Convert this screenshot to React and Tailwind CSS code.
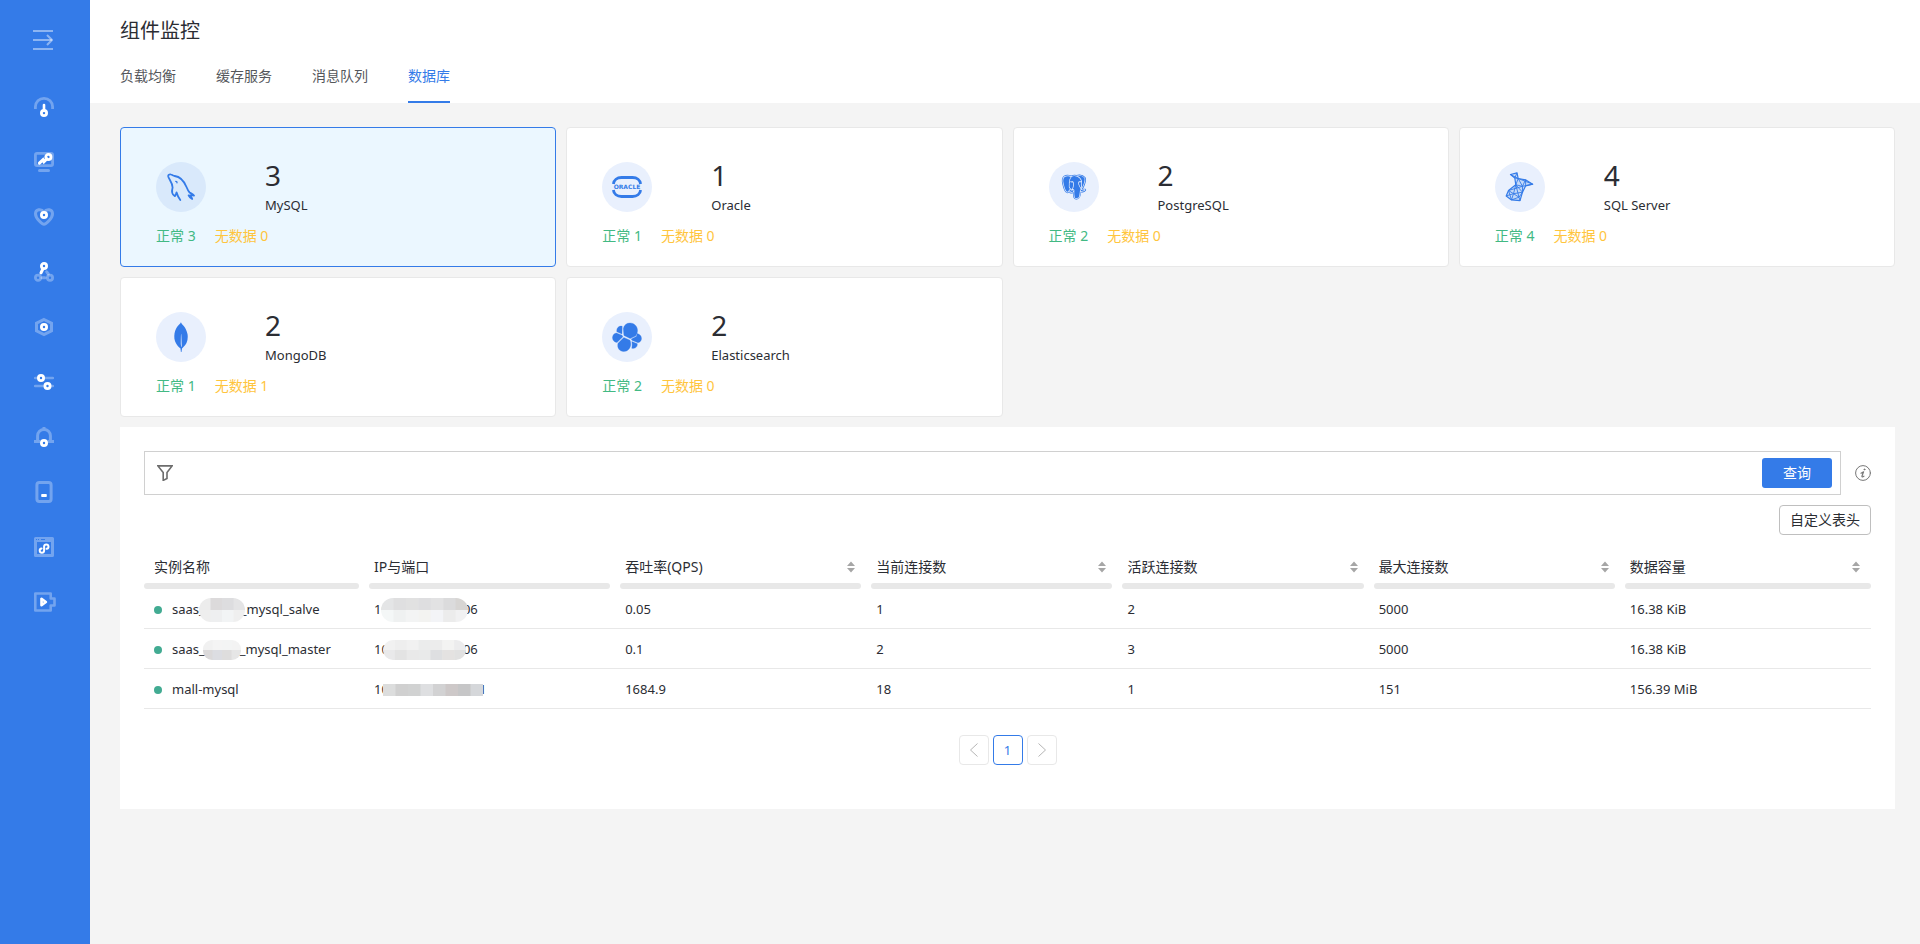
import { BiLogoPostgresql } from "react-icons/bi";
import { SiMongodb } from "react-icons/si";

const CJK = "font-['Noto_Sans','Noto_Sans_CJK_SC',sans-serif]";

/* ---------- sidebar icons ---------- */
const dim = "#ffffff50";

function NavSvg({ children }) {
  return (
    <svg viewBox="0 0 20 20" className="size-5" fill="none" aria-hidden="true">
      {children}
    </svg>
  );
}

const navItems = [
  {
    label: "概览",
    icon: (
      <NavSvg>
        <path d="M1.4 12V9.8a8.6 8.4 0 0 1 17.2 0V12" stroke={dim} strokeWidth="2.8" />
        <path d="M10 8v6" stroke="#fff" strokeWidth="2.6" strokeLinecap="round" />
        <circle cx="10" cy="16" r="2.6" stroke="#fff" strokeWidth="2.8" />
      </NavSvg>
    ),
  },
  {
    label: "监控",
    icon: (
      <NavSvg>
        <rect x="1.4" y="1.4" width="17.2" height="12.2" rx="1.6" stroke={dim} strokeWidth="2.8" />
        <path d="M5.5 18.5h9" stroke={dim} strokeWidth="3" strokeLinecap="round" />
        <path d="M5.4 11.2 9 7.8l1 2 3-3" stroke="#fff" strokeWidth="3" strokeLinecap="round" />
        <circle cx="14.4" cy="5" r="2.6" stroke="#fff" strokeWidth="2.8" />
      </NavSvg>
    ),
  },
  {
    label: "健康",
    icon: (
      <NavSvg>
        <path
          d="M10 17.200c-1.800 0-8.500-5.600-8.500-10.400C1.500 2.300 7 1.300 10 4.900 13 1.300 18.500 2.300 18.500 6.800 18.500 11.600 11.800 17.200 10 17.200Z"
          stroke={dim}
          strokeWidth="3"
        />
        <circle cx="10" cy="8" r="2.600" stroke="#fff" strokeWidth="2.800" />
      </NavSvg>
    ),
  },
  {
    label: "拓扑",
    icon: (
      <NavSvg>
        <circle cx="4" cy="15.700" r="2.600" stroke={dim} strokeWidth="2.800" />
        <circle cx="16" cy="15.700" r="2.600" stroke={dim} strokeWidth="2.800" />
        <path d="M8 15.700h3M14.300 12l-1.600-2.200" stroke={dim} strokeWidth="3" strokeLinecap="round" />
        <circle cx="10" cy="4" r="2.600" stroke="#fff" strokeWidth="2.800" />
        <path d="M8.800 7 7 10.800" stroke="#fff" strokeWidth="3" strokeLinecap="round" />
      </NavSvg>
    ),
  },
  {
    label: "容器",
    icon: (
      <NavSvg>
        <path d="M10 2.500 17.500 6.100v7.800L10 17.500 2.500 13.900V6.100Z" stroke={dim} strokeWidth="3" />
        <circle cx="10" cy="10" r="2.600" stroke="#fff" strokeWidth="2.800" />
      </NavSvg>
    ),
  },
  {
    label: "配置",
    icon: (
      <NavSvg>
        <path d="M1 6h2M11 6h8M1 14h8.500M17.500 14H19" stroke={dim} strokeWidth="2.400" strokeLinecap="round" />
        <circle cx="7" cy="6" r="2.600" stroke="#fff" strokeWidth="2.800" />
        <circle cx="13.500" cy="14" r="2.600" stroke="#fff" strokeWidth="2.800" />
      </NavSvg>
    ),
  },
  {
    label: "告警",
    icon: (
      <NavSvg>
        <path
          d="M6.300 14.500H0M20 14.500h-6.300M3.600 13V8.800a6.400 6.400 0 0 1 12.800 0V13M10 0v2"
          stroke={dim}
          strokeWidth="3"
        />
        <circle cx="10" cy="16" r="2.600" stroke="#fff" strokeWidth="2.800" />
      </NavSvg>
    ),
  },
  {
    label: "终端",
    icon: (
      <svg viewBox="0 0 20 22" className="-my-px h-[22px] w-5" fill="none" aria-hidden="true">
        <rect x="2.900" y="1.500" width="14.200" height="19" rx="2.500" stroke={dim} strokeWidth="3" />
        <rect x="7.200" y="13" width="5.600" height="3" rx="0.800" fill="#fff" />
      </svg>
    ),
  },
  {
    label: "链路",
    icon: (
      <NavSvg>
        <path
          fillRule="evenodd"
          d="M1.500 0h17A1.500 1.500 0 0 1 20 1.500v17a1.500 1.500 0 0 1-1.500 1.500h-17A1.500 1.500 0 0 1 0 18.500v-17A1.500 1.500 0 0 1 1.500 0ZM3 5v12h14V5ZM2 2v1h1V2Zm2 0v1h1V2Zm3 0v1h4V2Z"
          fill={dim}
        />
        <path
          d="M7.600 11.400a2.200 2.200 0 1 0 2.500 2.300V9.500a2.200 2.200 0 1 1 2.500 2.300"
          stroke="#fff"
          strokeWidth="2"
          strokeLinecap="round"
        />
      </NavSvg>
    ),
  },
  {
    label: "回放",
    icon: (
      <svg viewBox="0 0 22 20" className="ml-[2px] h-5 w-[22px]" fill="none" aria-hidden="true">
        <path d="M1.300 1.500h15.400v5h3.800v7h-3.800v5H1.300Z" stroke={dim} strokeWidth="2.600" strokeLinejoin="round" />
        <path d="M7.500 6.800v6.400l4.400-3.200Z" stroke="#fff" strokeWidth="2.600" strokeLinejoin="round" />
      </svg>
    ),
  },
];

/* ---------- database logos ---------- */
function MysqlLogo() {
  return (
    <svg
      viewBox="0 0 30 30"
      className="size-[30px]"
      fill="none"
      stroke="currentColor"
      strokeWidth="1.800"
      strokeLinecap="round"
      strokeLinejoin="round"
      aria-hidden="true"
    >
      <path d="M14.300 28c-1.600-2.300-2.900-4.600-3.700-7.600-.6 1.600-.9 2.700-1.700 3.700C6.500 22.800 5.300 20 6.600 15.400 6.500 10.800 2.800 7 2.200 4.400 1.900 2.900 3.400 2 5 2.500c1.400.4 2.200 1.300 3.700 1.500 6.600.8 9.600 5.800 11.800 11 .9 2.200 1.900 4.300 3.100 5.500 1.500 1 3.200 1.600 4.400 3-1.500-.300-2.900-.400-4.100-.100 1 1.200 1.900 2.100 2.300 3.600-1.600-.9-2.900-2-3.600-3.600" />
      <path d="M9.800 9.400c.8 0 1.300.5 1.200 1.400" strokeWidth="1.300" />
    </svg>
  );
}

function OracleLogo() {
  return (
    <svg viewBox="0 0 30 22" className="h-[22px] w-[30px]" fill="none" aria-hidden="true">
      <path
        d="M1.400 8C1.800 4 5 1.500 9.500 1.500h11c4.500 0 7.700 2.500 8.100 6.500M1.400 14c.4 4 3.600 6.500 8.100 6.500h11c4.500 0 7.700-2.500 8.100-6.500"
        stroke="#347be8"
        strokeWidth="2.800"
      />
      <text
        x="15"
        y="13.100"
        textAnchor="middle"
        fontSize="6"
        fontWeight="700"
        fontFamily="DejaVu Sans, sans-serif"
        fill="#347be8"
      >
        ORACLE
      </text>
    </svg>
  );
}

function SqlServerLogo() {
  return (
    <svg
      viewBox="0 0 30 30"
      className="size-[30px]"
      fill="none"
      stroke="currentColor"
      strokeWidth="1.200"
      strokeLinejoin="round"
      aria-hidden="true"
    >
      <path d="M5.500 2.500 12 .8l1.200 5.700 7.300 1.300 7.200 4.400-7 1.600-3.200 6.400L15 28.700l-8.500-.8-5.300-4 2.300-5.400 7.300-5.700-1-6.800Z" fill="currentColor" fillOpacity="0.200" />
      <path d="M5.500 2.500 13.200 6.500 9.800 6 12 .8M10.800 12.800 13.200 6.500l4.300 7.800 3-6.500.2 6M10.800 12.800l6.700 1.500 10.200-2.100-14.500-5.700M17.500 20.200l0-5.900L3.500 18.500l5 3.200 9-1.500-6.700-7.400-2.300 8.900-7.300 2.200M6.500 27.900l2-6.200 5.500 3.500 1 3.500M17.500 20.200 14 25.200l-7.500 2.700M14 25.200l-3.200-12.400M3.500 18.500l3 9.400" strokeWidth="0.900" />
    </svg>
  );
}

function ElasticLogo() {
  return (
    <svg
      viewBox="0 0 30 30"
      className="size-[30px]"
      fill="currentColor"
      stroke="currentColor"
      strokeWidth="0.300"
      strokeLinejoin="round"
      aria-hidden="true"
    >
      <path d="M11.300 6.500C12 3 14.500 1 18 1c4.200 0 7.500 3.300 7.500 7.500 0 2-.8 4-2 5.500l-5.400 2.600-6.200-3.200Z" />
      <path d="M10.200 4.200 10 12 4.800 9.800C4.300 6.300 6.600 3.500 10.200 4.200Z" />
      <path d="M4.400 11 10 13.200l.9 1.600L5 20.600C2 20 .4 18 .5 15.500.6 13.200 2 11.500 4.400 11Z" />
      <path d="M6 21.300 11.800 15.400 18 18.200c.5 1.300.8 2.400.8 3.800 0 4-3 7.500-7 7.500-4.500 0-7-3.800-5.800-8.200Z" />
      <path d="M25.200 11.500c2.600.7 4.300 2.500 4.300 4.900 0 2.200-1.300 3.800-3.600 4.400l-6-2.600-.6-1.300 5-2.500Z" />
      <path d="m19.800 19.600 5.500 2.200c.3 3-1.700 5-5.500 4.500.4-2.300.5-4.300 0-6.700Z" />
    </svg>
  );
}

const databases = [
  { name: "MySQL", total: 3, ok: 3, none: 0, active: true, logo: <MysqlLogo /> },
  { name: "Oracle", total: 1, ok: 1, none: 0, logo: <OracleLogo /> },
  { name: "PostgreSQL", total: 2, ok: 2, none: 0, logo: <BiLogoPostgresql className="size-[30px]" /> },
  { name: "SQL Server", total: 4, ok: 4, none: 0, logo: <SqlServerLogo /> },
  { name: "MongoDB", total: 2, ok: 1, none: 1, logo: <SiMongodb className="size-[30px]" /> },
  { name: "Elasticsearch", total: 2, ok: 2, none: 0, logo: <ElasticLogo /> },
];

function DatabaseCard({ name, total, ok, none, active, logo }) {
  return (
    <button
      type="button"
      aria-pressed={!!active}
      className={
        "flex h-[140px] cursor-pointer flex-col rounded-[4px] border px-[35px] pt-[30px] text-left " +
        (active ? "border-[#347be8] bg-[#ebf7ff]" : "border-[#e8e8e8] bg-white")
      }
    >
      <span className="flex items-center">
        <span
          className={
            "flex size-[50px] items-center justify-center rounded-full text-[#347be8] " +
            (active ? "bg-[#d9e9fb]" : "bg-[#e9f0fd]")
          }
        >
          {logo}
        </span>
        <span className="ml-[59px] flex flex-col gap-[2px]">
          <span className="text-[28px] leading-[34px]">{total}</span>
          <span className="text-[13px] leading-[22px]">{name}</span>
        </span>
      </span>
      <span className="mt-[9px] flex gap-[19px] text-[14px] leading-[22px]">
        <span className="text-[#42b983]">正常 {ok}</span>
        <span className="text-[#ffc53d]">无数据 {none}</span>
      </span>
    </button>
  );
}

/* ---------- masked values ---------- */
function Mask({ className, width, height, rounded, rows }) {
  const id = "mask-" + width + "-" + height + "-" + rounded;
  const rowHeight = height / rows.length;
  return (
    <svg viewBox={`0 0 ${width} ${height}`} className={"relative shrink-0 " + className} aria-hidden="true">
      <clipPath id={id}>
        <rect width={width} height={height} rx={rounded} />
      </clipPath>
      <g clipPath={`url(#${id})`}>
        {rows.map((colors, r) =>
          colors.map((c, i) => (
            <rect
              key={r + "-" + i}
              x={(i * width) / colors.length}
              y={r * rowHeight}
              width={width / colors.length + 0.5}
              height={rowHeight}
              fill={c}
            />
          ))
        )}
      </g>
    </svg>
  );
}

const instances = [
  {
    name: (
      <>
        saas_
        <Mask
          className="-mr-[4px] -ml-[6px] h-6 w-[46px]"
          width={46}
          height={24}
          rounded={12}
          rows={[
            ["#ececec", "#dcdadb", "#dddddf", "#e4e4e5"],
            ["#eeeeee", "#eeeff0", "#f2f4f5", "#efefef"],
          ]}
        />
        _mysql_salve
      </>
    ),
    ip: (
      <>
        10
        <Mask
          className="-mr-[5px] -ml-2 h-6 w-[87px]"
          width={87}
          height={24}
          rounded={12}
          rows={[
            ["#e4e5e6", "#dfdfe0", "#e1e1e1", "#dedee0", "#e2e2e3", "#dbdbdc", "#d7d5d3"],
            ["#f4f7f7", "#eff1f1", "#f3f4f4", "#f3f3f1", "#f3f4f7", "#ececec", "#f1f1f2"],
          ]}
        />
        06
      </>
    ),
    values: ["0.05", "1", "2", "5000", "16.38 KiB"],
  },
  {
    name: (
      <>
        saas_
        <Mask
          className="-mr-px -ml-[2px] h-5 w-[38px]"
          width={38}
          height={20}
          rounded={9}
          rows={[
            ["#f1f1f1", "#f4f4f4", "#f3f4f4", "#f3f3f3"],
            ["#dbd9da", "#dcdde2", "#dedddd", "#e6e6e6"],
          ]}
        />
        _mysql_master
      </>
    ),
    ip: (
      <>
        10
        <Mask
          className="-mr-[3px] -ml-[6px] h-5 w-[83px]"
          width={83}
          height={20}
          rounded={10}
          rows={[
            ["#f1f1f1", "#eeeeee", "#f1f1f1", "#ebecec", "#ececec", "#f3f3f2", "#ececed"],
            ["#e9e9ea", "#e3e3e3", "#e9e9e9", "#e9eaea", "#dedfe1", "#e4e2e1", "#e1e1e1"],
          ]}
        />
        06
      </>
    ),
    values: ["0.1", "2", "3", "5000", "16.38 KiB"],
  },
  {
    name: "mall-mysql",
    ip: (
      <>
        10
        <Mask
          className="-mr-[4px] -ml-[6px] h-3 w-[100px]"
          width={100}
          height={12}
          rounded={0}
          rows={[
            ["#dcdddd", "#d0d0d0", "#d1d2d2", "#dedfe1", "#d2d2d3", "#cdc8c8", "#c6c6c7", "#d5d7da"],
          ]}
        />
        1
      </>
    ),
    values: ["1684.9", "18", "1", "151", "156.39 MiB"],
  },
];

const columns = [
  { title: "实例名称" },
  { title: "IP与端口" },
  { title: "吞吐率(QPS)", sortable: true },
  { title: "当前连接数", sortable: true },
  { title: "活跃连接数", sortable: true },
  { title: "最大连接数", sortable: true },
  { title: "数据容量", sortable: true },
];

function SortButton({ title }) {
  return (
    <button type="button" aria-label={"排序 " + title} className="cursor-pointer">
      <svg viewBox="0 0 8 12" className="h-3 w-2" fill="#a6a6a6" aria-hidden="true">
        <path d="M4 0.500 8 5H0ZM4 11.500 0 7h8Z" />
      </svg>
    </button>
  );
}

const cell = "border-b border-[#e8e8e8] pt-[2px] pb-0 pl-[10px]";

export default function App() {
  return (
    <div className={"flex min-h-screen bg-[#f4f4f4] text-[14px] text-[#2b2d33] " + CJK}>
      <aside className="flex w-[90px] shrink-0 flex-col items-center bg-[#347be8] pt-[30px]">
        <button type="button" aria-label="展开菜单" className="mr-[4px] cursor-pointer">
          <svg viewBox="0 0 20 20" className="size-5" fill="none" stroke="#ffffff70" strokeWidth="2" aria-hidden="true">
            <path d="M0 1h20M0 10h19M0 19h20" />
            <path d="m14 5 5 5-5 5" />
          </svg>
        </button>
        <nav className="mt-[47px] flex w-full flex-col items-center gap-[35px] pr-[2px]">
          {navItems.map((item) => (
            <a key={item.label} href="#" aria-label={item.label}>
              {item.icon}
            </a>
          ))}
        </nav>
      </aside>

      <div className="flex min-w-0 flex-1 flex-col">
        <header className="bg-white pl-[30px]">
          <h1 className="pt-4 text-[20px] leading-[30px] font-normal">组件监控</h1>
          <nav className="mt-[15px] flex gap-10 leading-[22px] text-[#55575c]">
            <a href="#" className="h-[42px] pt-[4px]">负载均衡</a>
            <a href="#" className="h-[42px] pt-[4px]">缓存服务</a>
            <a href="#" className="h-[42px] pt-[4px]">消息队列</a>
            <a href="#" aria-current="page" className="h-[42px] border-b-2 border-[#347be8] pt-[4px] text-[#347be8]">
              数据库
            </a>
          </nav>
        </header>

        <main className="pt-6 pr-[25px] pb-6 pl-[30px]">
          <section className="grid grid-cols-4 gap-[10px]">
            {databases.map((db) => (
              <DatabaseCard key={db.name} {...db} />
            ))}
          </section>

          <section className="mt-[10px] bg-white px-6 pt-6 pb-11">
            <div className="flex items-center gap-[14px]">
              <div className="flex h-[44px] flex-1 items-center border border-[#d0d0d0] pr-2 pl-3">
                <svg viewBox="0 0 16 16" className="size-4" fill="none" stroke="#6d6d6d" strokeWidth="1.600" aria-hidden="true">
                  <path d="M0.900 0.900h14.200L10 7.600v5.900l-3.800 1.900V7.600Z" />
                </svg>
                <input type="text" aria-label="筛选条件" className="mx-3 h-full flex-1 outline-none" />
                <button type="button" className="h-[30px] w-[70px] cursor-pointer rounded-[3px] bg-[#347be8] pb-[2px] text-white">
                  查询
                </button>
              </div>
              <button type="button" aria-label="帮助" className="cursor-pointer">
                <svg viewBox="0 0 16 16" className="size-4" fill="none" stroke="#777" strokeLinecap="round" aria-hidden="true">
                  <circle cx="8" cy="8" r="7.400" />
                  <path d="M6 8.200 8.600 6.800 7 11c-.3 1 .5 1.200 1.900.2" strokeWidth="1.200" strokeLinejoin="round" />
                  <circle cx="9.400" cy="4.400" r="0.500" fill="#777" />
                </svg>
              </button>
            </div>

            <div className="mt-[10px] flex justify-end">
              <button type="button" className="h-[30px] w-[92px] cursor-pointer rounded-[4px] border border-[#bfbfbf] bg-white pb-[2px]">
                自定义表头
              </button>
            </div>

            <table className="mt-[20px] w-full table-fixed border-separate border-spacing-0">
              <thead>
                <tr>
                  {columns.map((col, i) => (
                    <th
                      key={col.title}
                      className={
                        "p-0 text-left font-normal " +
                        (i === 0 ? "w-[220px] pr-[5px]" : i === columns.length - 1 ? "pl-[5px]" : "px-[5px]")
                      }
                    >
                      <div
                        className={
                          "flex h-6 items-center justify-between leading-[24px] " +
                          (i === 0 ? "pl-[10px]" : i === columns.length - 1 ? "pr-[11px] pl-[5px]" : "pr-[6px] pl-[5px]")
                        }
                      >
                        <span>{col.title}</span>
                        {col.sortable && <SortButton title={col.title} />}
                      </div>
                      <div className="mt-1 h-[6px] rounded-full bg-[#e8e8e8]" />
                    </th>
                  ))}
                </tr>
              </thead>
              <tbody className="text-[13px]">
                {instances.map((row, r) => (
                  <tr key={r} className="h-10">
                    <td className={cell}>
                      <div className="flex items-center whitespace-nowrap">
                        <span className="mr-[10px] size-2 rounded-full bg-[#42ab92]" />
                        {row.name}
                      </div>
                    </td>
                    <td className={cell}>
                      <div className="flex items-center">{row.ip}</div>
                    </td>
                    {row.values.map((value, i) => (
                      <td key={i} className={cell}>
                        {value}
                      </td>
                    ))}
                  </tr>
                ))}
              </tbody>
            </table>

            <nav aria-label="分页" className="mt-[26px] flex justify-center gap-1">
              <button type="button" aria-label="上一页" className="flex size-[30px] cursor-pointer items-center justify-center rounded-[4px] border border-[#e8e8e8]">
                <svg viewBox="0 0 8 14" className="h-[14px] w-2" fill="none" stroke="#b5b5b5" aria-hidden="true">
                  <path d="M7.500 0.500 0.500 7l7 6.500" />
                </svg>
              </button>
              <button type="button" aria-current="page" className="size-[30px] cursor-pointer rounded-[4px] border border-[#347be8] pt-[2px] text-[13px] text-[#347be8]">
                1
              </button>
              <button type="button" aria-label="下一页" className="flex size-[30px] cursor-pointer items-center justify-center rounded-[4px] border border-[#e8e8e8]">
                <svg viewBox="0 0 8 14" className="h-[14px] w-2" fill="none" stroke="#b5b5b5" aria-hidden="true">
                  <path d="m0.500 0.500 7 6.500-7 6.500" />
                </svg>
              </button>
            </nav>
          </section>
        </main>
      </div>
    </div>
  );
}
